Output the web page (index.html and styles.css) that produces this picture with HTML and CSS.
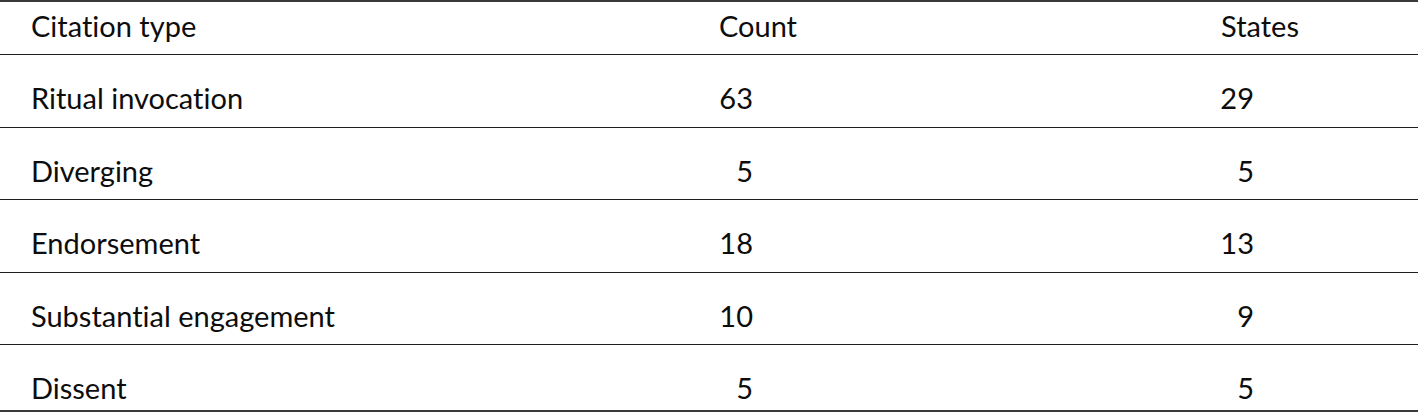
FILE: index.html
```html
<!DOCTYPE html>
<html lang="en">
<head>
<meta charset="utf-8">
<title>Citation types</title>
<link rel="stylesheet" href="styles.css">
</head>
<body>
<div class="table">
  <div class="row head">
    <div class="cell label">Citation type</div>
    <div class="cell title">Count</div>
    <div class="cell title last">States</div>
  </div>
  <div class="row">
    <div class="cell label">Ritual invocation</div>
    <div class="cell val">63</div>
    <div class="cell val last">29</div>
  </div>
  <div class="row">
    <div class="cell label">Diverging</div>
    <div class="cell val">5</div>
    <div class="cell val last">5</div>
  </div>
  <div class="row">
    <div class="cell label">Endorsement</div>
    <div class="cell val">18</div>
    <div class="cell val last">13</div>
  </div>
  <div class="row">
    <div class="cell label">Substantial engagement</div>
    <div class="cell val">10</div>
    <div class="cell val last">9</div>
  </div>
  <div class="row final">
    <div class="cell label">Dissent</div>
    <div class="cell val">5</div>
    <div class="cell val last">5</div>
  </div>
</div>
</body>
</html>
```
FILE: styles.css
```css
html, body {
  margin: 0;
  padding: 0;
  background: #ffffff;
}

body {
  font-family: "Lato", "Open Sans", sans-serif;
  font-size: 29px;
  color: #0d0d0d;
  font-variant-ligatures: none;
}

.table {
  width: 1418px;
  border-top: 2px solid #3a3a3a;
  border-bottom: 2px solid #3a3a3a;
  box-sizing: border-box;
}

.row {
  display: grid;
  grid-template-columns: 500px 516px 402px;
  height: 73px;
  padding-top: 25px;
  border-bottom: 1px solid #1e1e1e;
  box-sizing: border-box;
}

.row:nth-child(odd) {
  height: 72px;
}

.row.head {
  height: 53px;
  padding-top: 6px;
}

.row.final {
  height: 65px;
  border-bottom: none;
}

.cell {
  line-height: 36px;
  white-space: nowrap;
}

.label {
  padding-left: 31px;
}

.title {
  text-align: center;
}

.title.last {
  padding-left: 86px;
}

.val {
  text-align: right;
  padding-right: 263px;
}

.val.last {
  padding-right: 164px;
}
```
